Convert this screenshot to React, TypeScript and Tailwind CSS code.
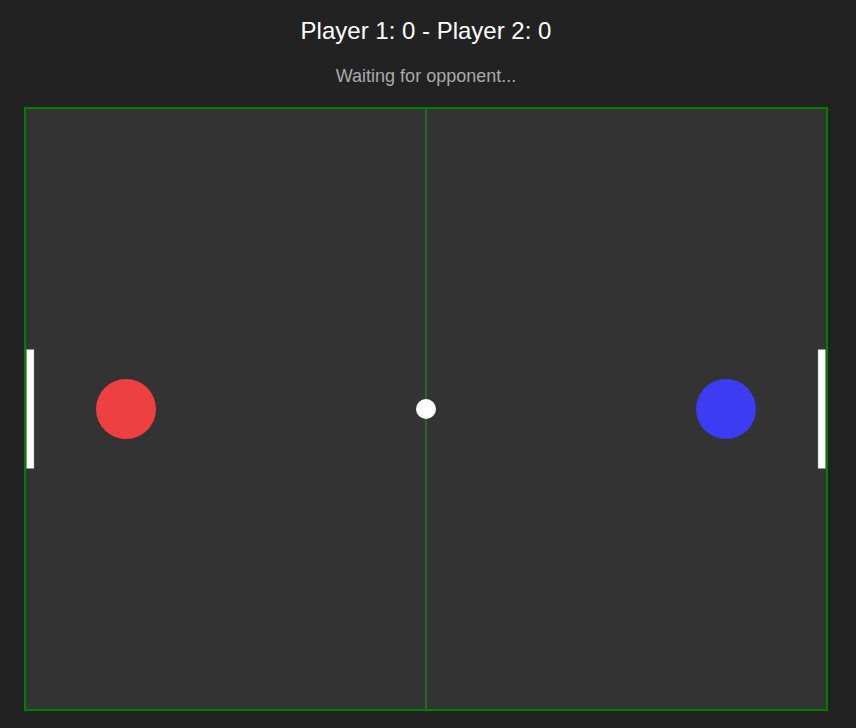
export default function App() {
  return (
    <div className="min-h-screen bg-[#222222] pt-[15px] font-['Liberation_Sans',Arial,sans-serif]">
      <div className="ml-[24px] w-[804px] flex flex-col items-center">
        <h1 className="text-[24px] leading-[32px] text-white">Player 1: 0 - Player 2: 0</h1>
        <p className="mt-[17px] text-[18px] leading-[24px] text-[#aaaaaa]">Waiting for opponent...</p>

        {/* Game board */}
        <div className="mt-[19px] w-[804px] h-[604px] border-2 border-[#008000] bg-[#333333]">
          <svg width="800" height="600" viewBox="0 0 800 600" className="block">
            <line x1="400" y1="0" x2="400" y2="600" stroke="#1f6b1f" strokeWidth="2" />
            <rect x="0.5" y="240.5" width="7.5" height="119" fill="#ffffff" stroke="#888888" strokeWidth="0.5" />
            <rect x="792" y="240.5" width="7.5" height="119" fill="#ffffff" stroke="#888888" strokeWidth="0.5" />
            <circle cx="100" cy="300" r="30" fill="#ee4040" />
            <circle cx="700" cy="300" r="30" fill="#3c3cf2" />
            <circle cx="400" cy="300" r="10" fill="#ffffff" />
          </svg>
        </div>
      </div>
    </div>
  );
}
